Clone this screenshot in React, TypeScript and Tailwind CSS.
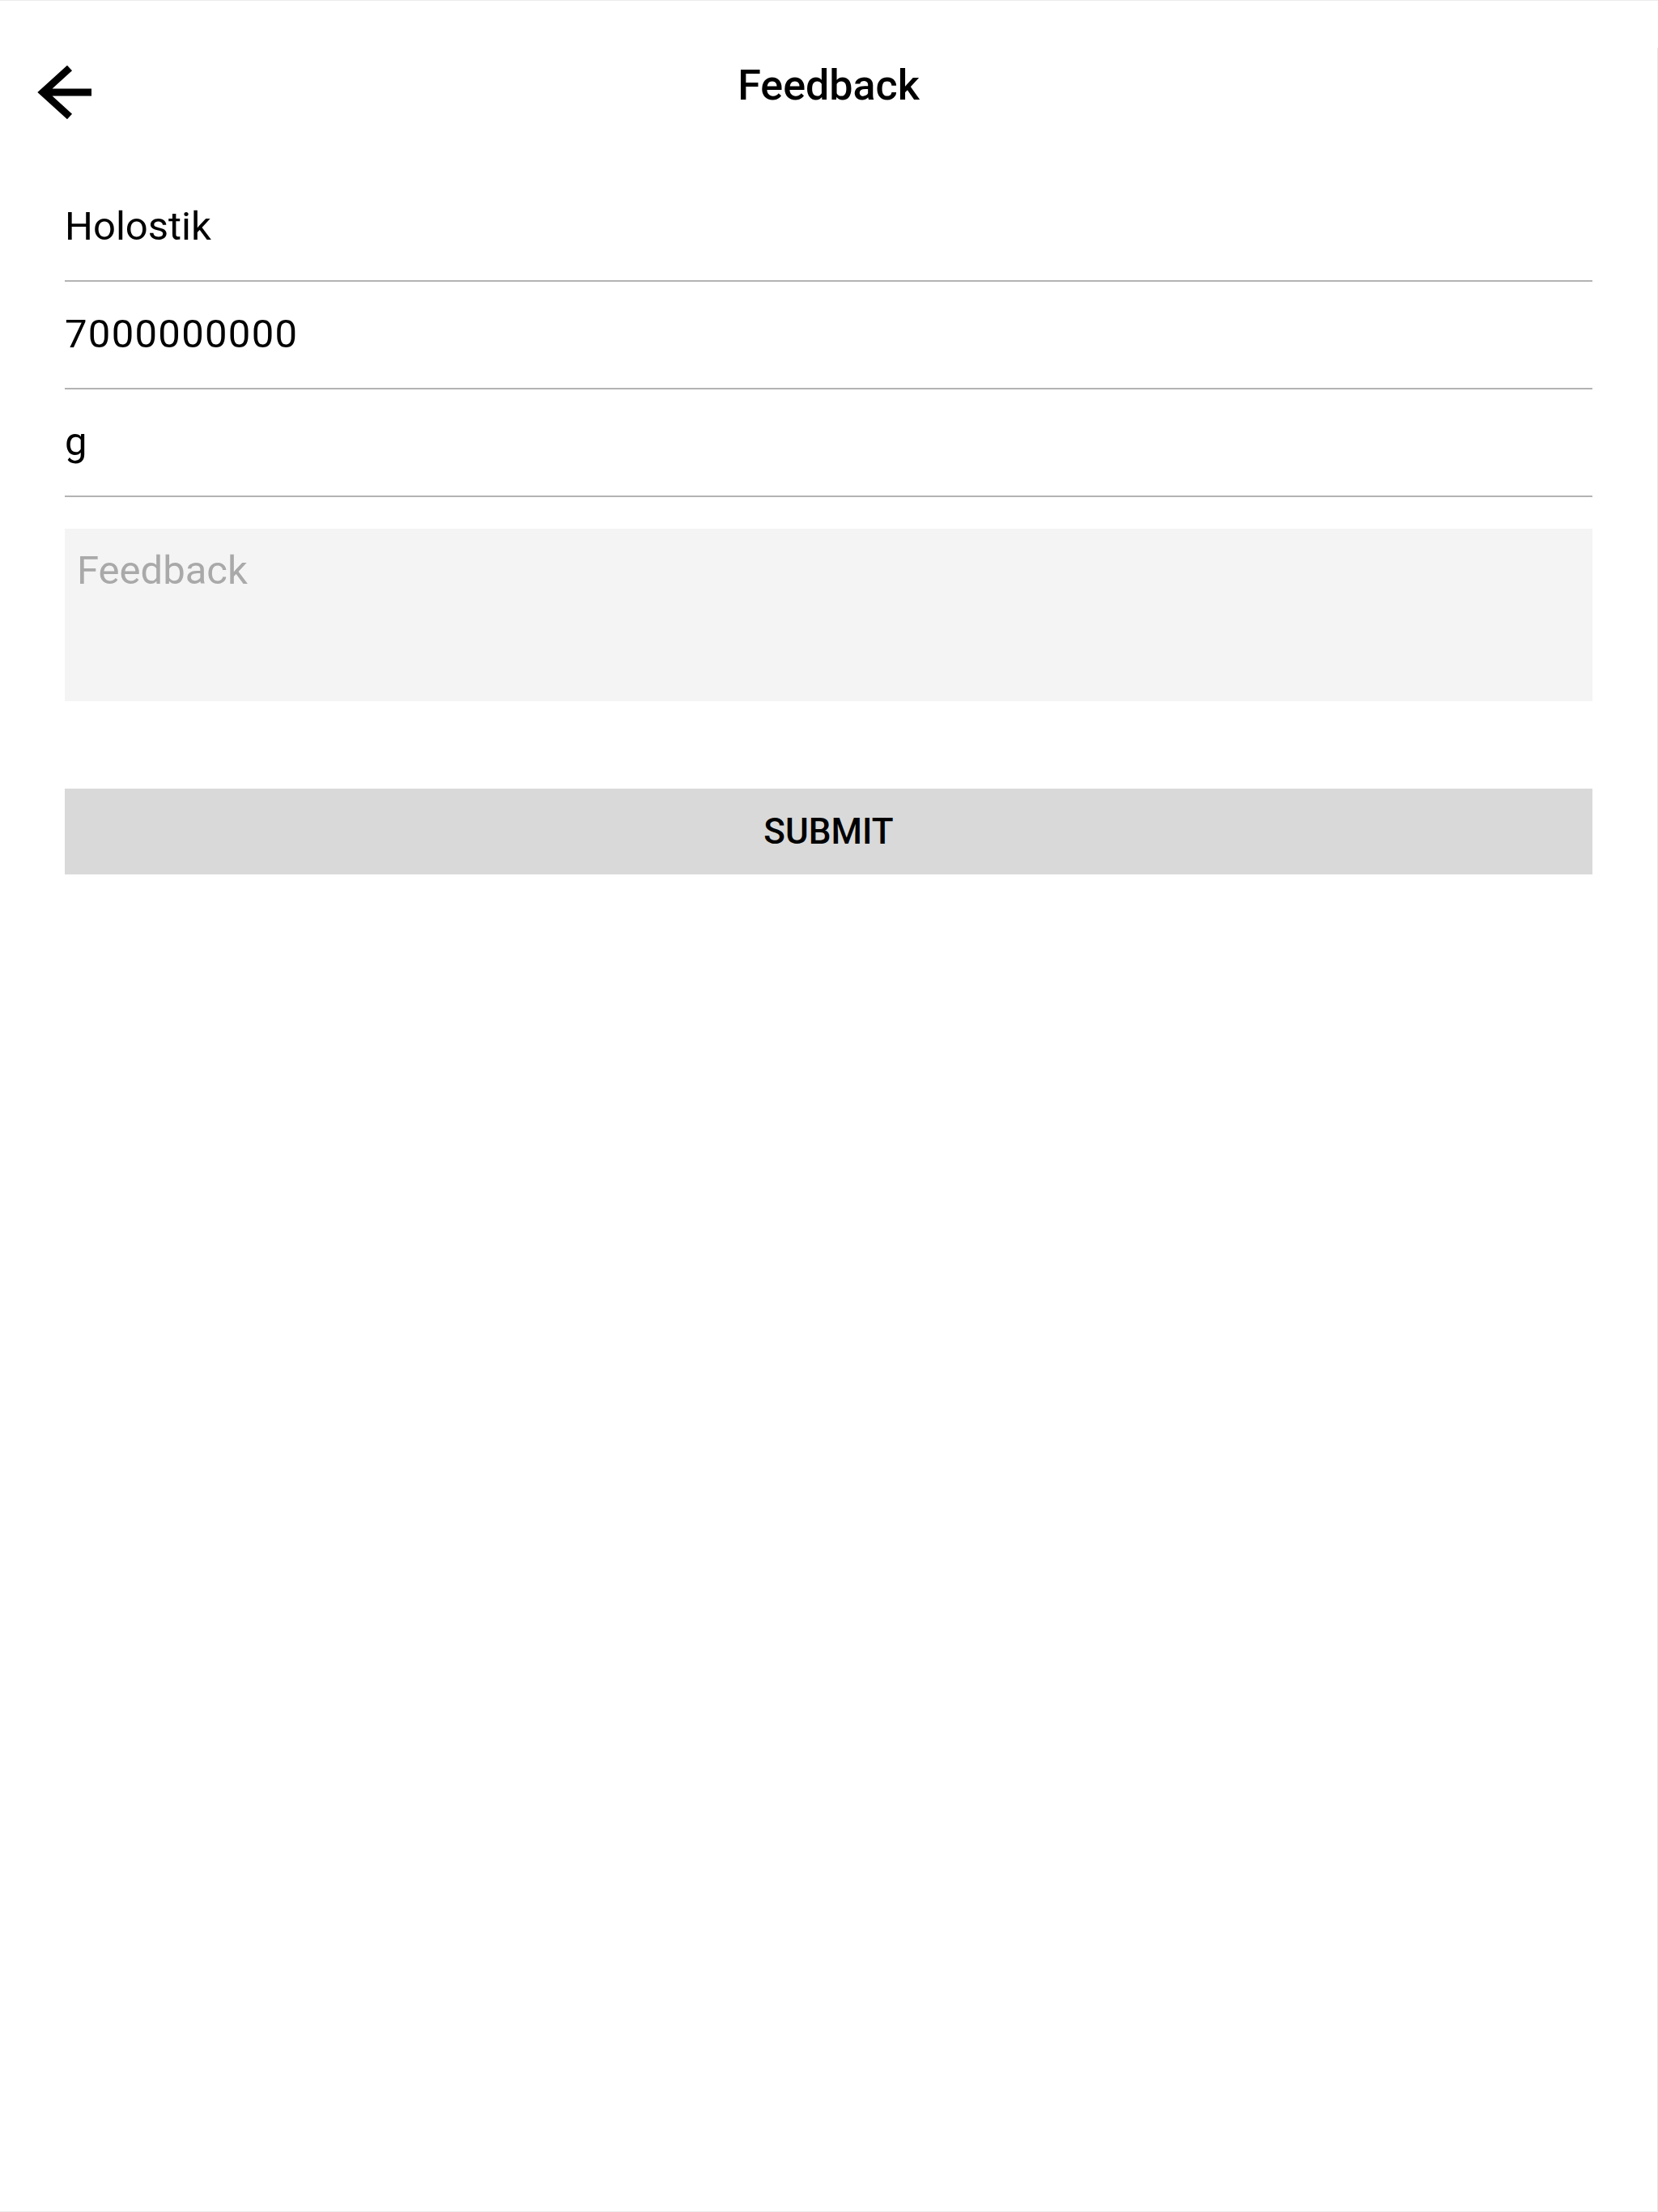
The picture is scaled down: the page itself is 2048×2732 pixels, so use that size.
import React from "react";

function BackArrow() {
  return (
    <svg width="72" height="70" viewBox="0 0 72 70" className="block">
      <path
        d="M41 5 L8 35 L41 65 M8 35 L68 35"
        fill="none"
        stroke="#000"
        strokeWidth="9"
        strokeLinecap="butt"
        strokeLinejoin="miter"
      />
    </svg>
  );
}

function Row({ text, wide }: { text: string; wide?: boolean }) {
  return (
    <div className="h-[133px] border-b-2 border-[#b3b3b3] pt-[40px]">
      <div className={wide ? "text-[49px] leading-[50px] text-black tracking-[1.3px]" : "text-[49px] leading-[50px] text-black"}>
        {text}
      </div>
    </div>
  );
}

export default function App() {
  return (
    <div
      className="w-[2048px] h-[2732px] flex flex-row bg-white border-t border-b border-[#ececec]"
      style={{ fontFamily: "Roboto, 'Liberation Sans', sans-serif" }}
    >
      <div className="flex-1 flex flex-col">
        <div className="h-[214px] pt-[78px] grid grid-cols-[1fr_auto_1fr] items-start">
          <div className="pl-[45px]">
            <BackArrow />
          </div>
          <div className="text-[52px] leading-[54px] font-medium text-black">Feedback</div>
          <div />
        </div>
        <div className="px-[80px] flex flex-col">
          <Row text="Holostik" />
          <Row text="7000000000" wide />
          <Row text="g" />
          <div className="mt-[39px] h-[213px] bg-[#f4f4f4] pt-[27px] pl-[15px]">
            <div className="text-[49px] leading-[50px] text-[#a9a9a9]">Feedback</div>
          </div>
          <div className="mt-[108px] h-[106px] bg-[#d9d9d9] flex items-center justify-center">
            <span className="text-[44px] leading-[46px] font-medium text-black">SUBMIT</span>
          </div>
        </div>
      </div>
      <div className="w-px flex flex-col">
        <div className="h-[58px]" />
        <div className="flex-1 bg-[#e6e6e6]" />
      </div>
    </div>
  );
}
